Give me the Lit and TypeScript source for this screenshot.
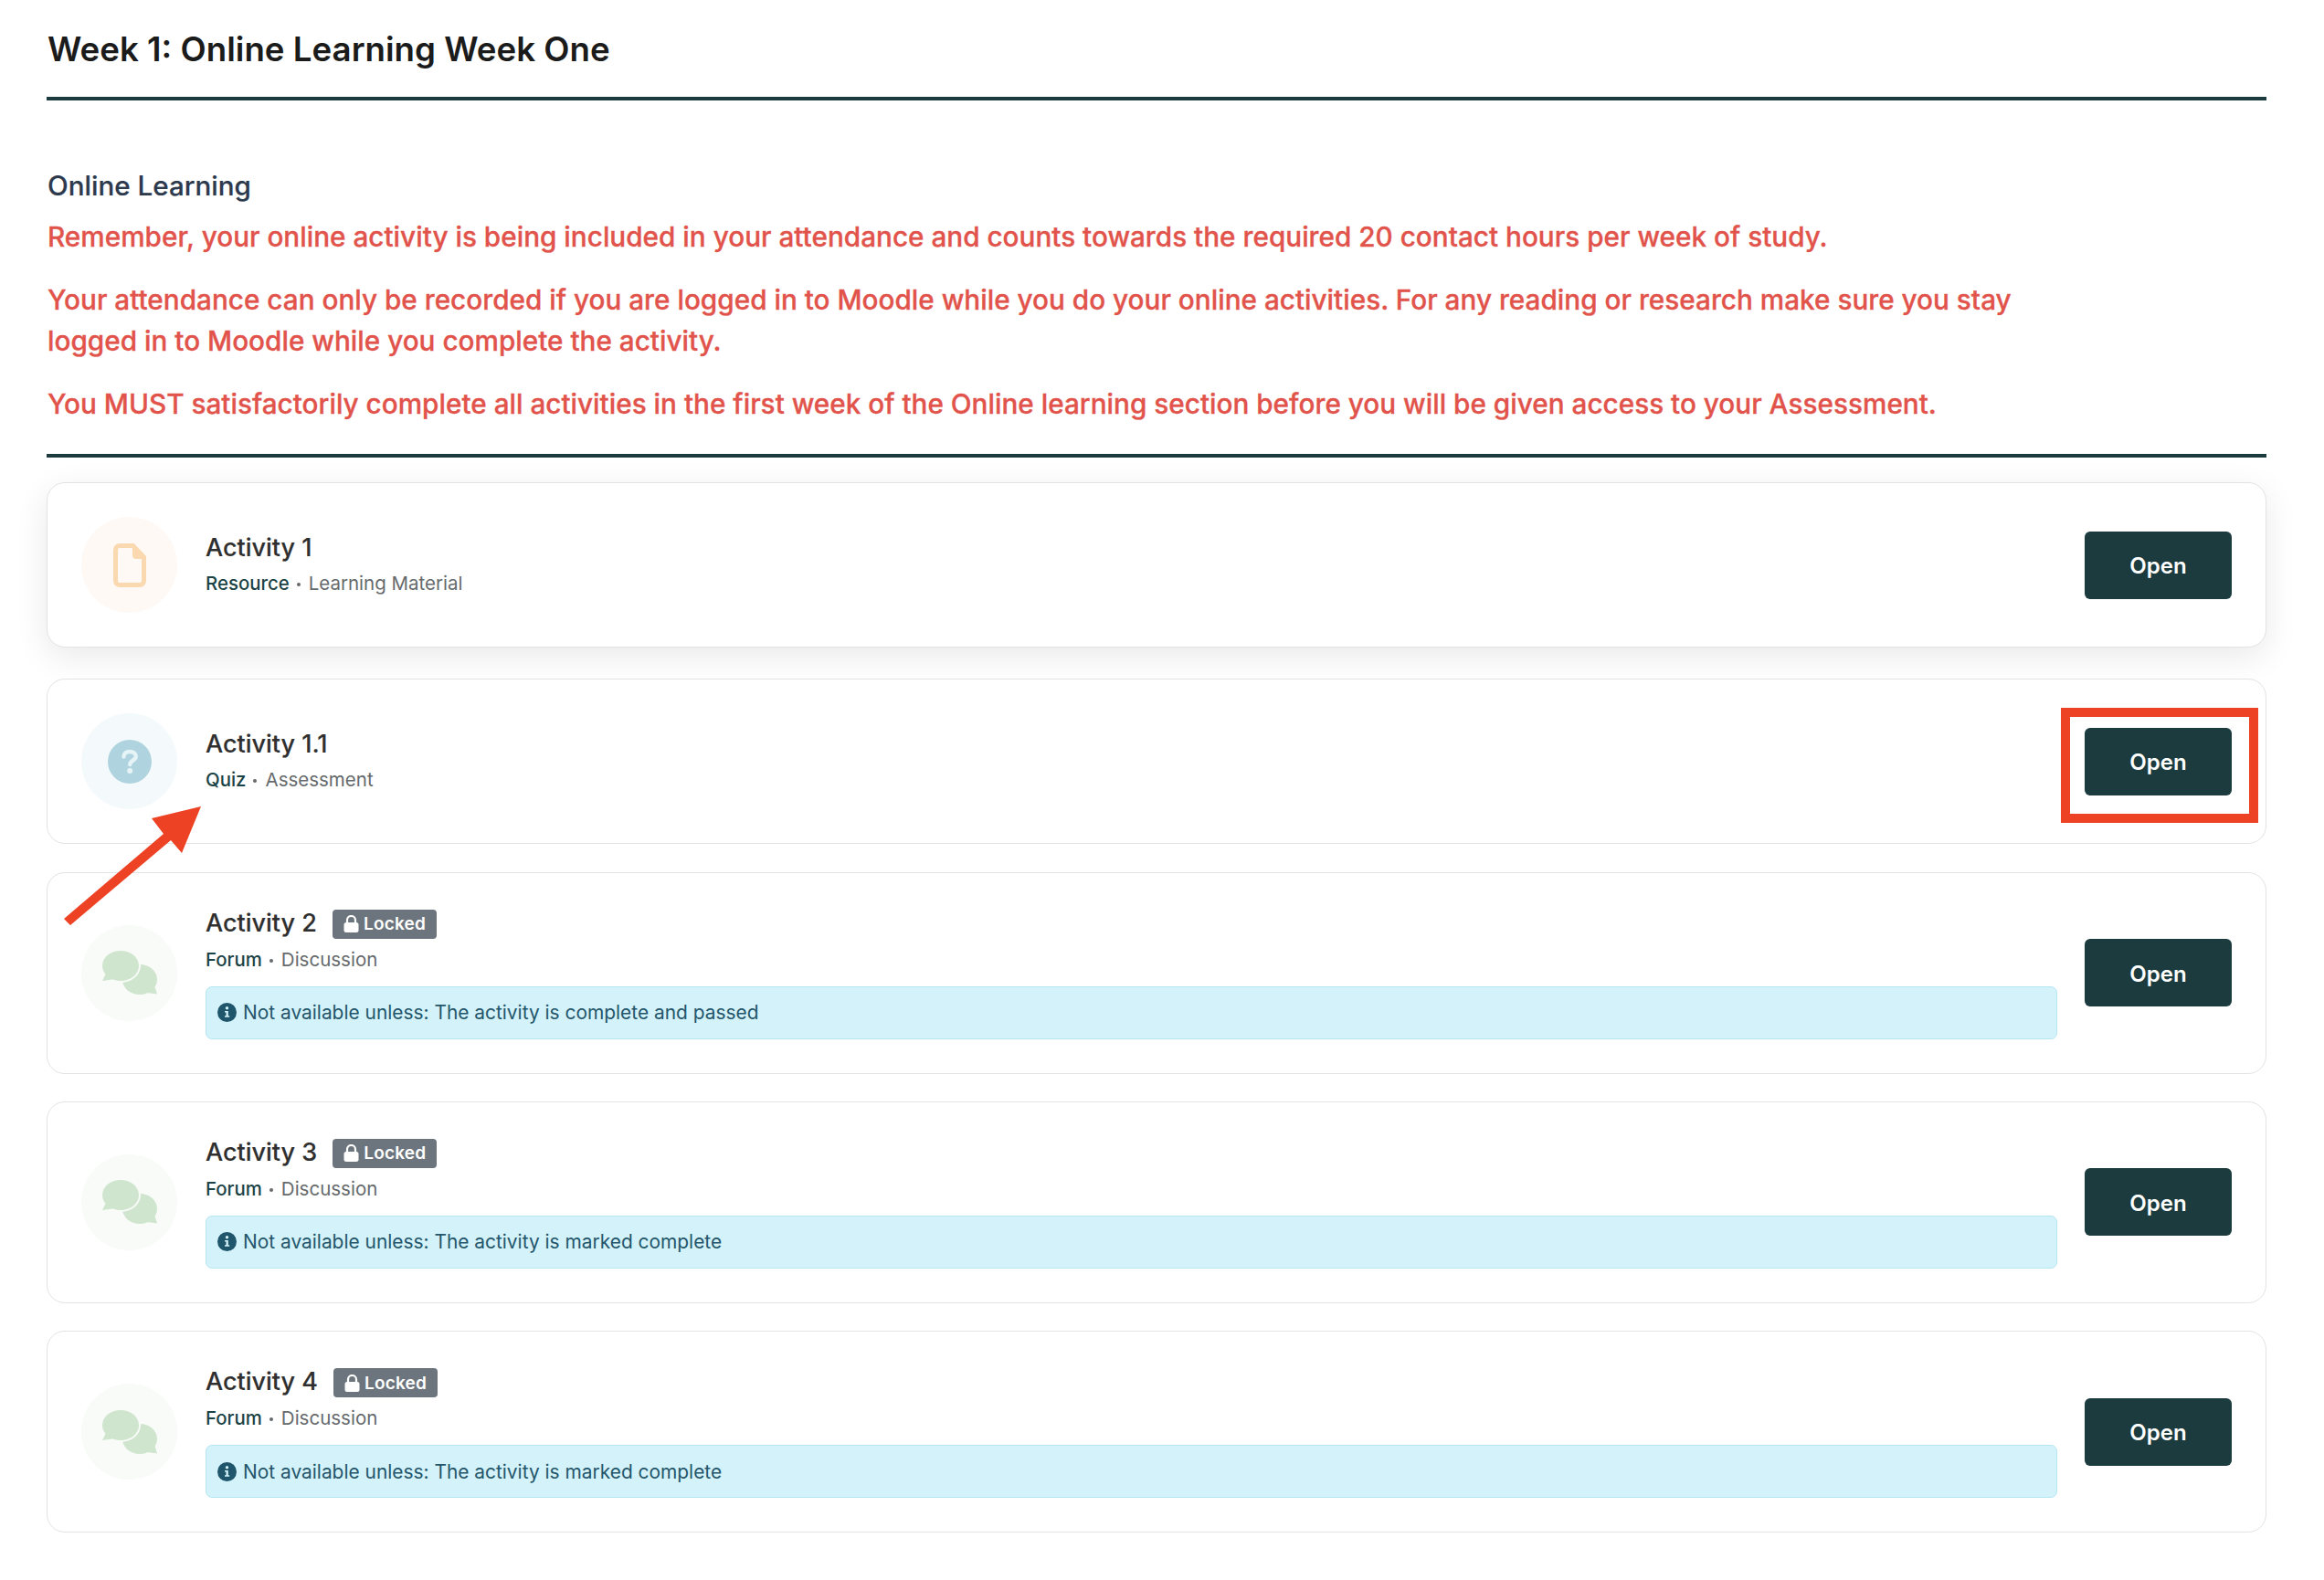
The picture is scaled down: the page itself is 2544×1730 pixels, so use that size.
import { LitElement, html, css, svg } from "lit";
import { customElement } from "lit/decorators.js";

type Act = { title: string; type: string; kind: string; icon: "file" | "quiz" | "chat"; note?: string; raised?: boolean };

const ACTS: Act[] = [
  { title: "Activity 1", type: "Resource", kind: "Learning Material", icon: "file", raised: true },
  { title: "Activity 1.1", type: "Quiz", kind: "Assessment", icon: "quiz" },
  { title: "Activity 2", type: "Forum", kind: "Discussion", icon: "chat", note: "Not available unless: The activity is complete and passed" },
  { title: "Activity 3", type: "Forum", kind: "Discussion", icon: "chat", note: "Not available unless: The activity is marked complete" },
  { title: "Activity 4", type: "Forum", kind: "Discussion", icon: "chat", note: "Not available unless: The activity is marked complete" },
];

const fileIcon = svg`<svg width="36" height="48" viewBox="0 0 36 48"><path d="M7 2.500H21.500L33.500 15V41A4.500 4.500 0 0 1 29 45.500H7A4.500 4.500 0 0 1 2.500 41V7A4.500 4.500 0 0 1 7 2.500Z" fill="none" stroke="#fbd9b0" stroke-width="5"/><path d="M21 1H23L35 14V17H25A4 4 0 0 1 21 13Z" fill="#fbd9b0"/></svg>`;
const quizIcon = svg`<svg width="48" height="48" viewBox="0 0 48 48"><circle cx="24" cy="24" r="24" fill="#b0d3e0"/><path d="M17.500 18.500C17.500 15 20 13 24 13C28 13 30.800 15 30.800 18.300C30.800 22.500 24.300 22.800 24.300 27" fill="none" stroke="#e6f3f7" stroke-width="4.400" stroke-linecap="round"/><circle cx="24.200" cy="34" r="3" fill="#e6f3f7"/></svg>`;
const chatIcon = svg`<svg width="60" height="48" viewBox="0 0 60 48"><ellipse cx="41" cy="31.500" rx="19" ry="16.500" fill="#cfe5cd"/><path d="M50 40L57 38L60 47.500L49 46Z" fill="#cfe5cd"/><ellipse cx="20" cy="16.500" rx="22" ry="18.500" fill="#f8fbf8"/><ellipse cx="20" cy="16.500" rx="20" ry="16.500" fill="#cfe5cd"/><path d="M4 25L0 33L11 31.500L13 28Z" fill="#cfe5cd"/></svg>`;
const lockIcon = svg`<svg width="17" height="19" viewBox="0 0 17 19"><path d="M4 9V5.500A4.500 4.500 0 0 1 13 5.500V9" fill="none" stroke="#fff" stroke-width="2.200"/><rect x="0.500" y="8" width="16" height="11" rx="2.500" fill="#fff"/></svg>`;
const infoIcon = svg`<svg width="21" height="21" viewBox="0 0 21 21"><circle cx="10.500" cy="10.500" r="10.500" fill="#20566b"/><circle cx="10.500" cy="5.800" r="1.700" fill="#d4f2fa"/><path d="M8 9H11.800V14.200H13.200V15.800H8V14.200H9.500V10.600H8Z" fill="#d4f2fa"/></svg>`;

const ICONS = { file: fileIcon, quiz: quizIcon, chat: chatIcon };

@customElement("app-root")
export class AppRoot extends LitElement {
  static styles = css`
    :host {
      display: block;
      position: relative;
      box-sizing: border-box;
      min-height: 1730px;
      padding: 0 63px 0 51px;
      background: #fff;
      font-family: Inter, "Liberation Sans", sans-serif;
      color: #2f2f2f;
    }
    h1 {
      margin: 0;
      padding: 31px 0 0 1px;
      box-sizing: border-box;
      font-size: 36.700px;
      line-height: 46px;
      font-weight: 600;
      color: #1b1b1b;
      border-bottom: 4px solid #1b3b3f;
      height: 110px;
    }
    .intro {
      height: 391px;
      box-sizing: border-box;
      padding: 72px 0 0 1px;
      border-bottom: 4px solid #1b3b3f;
    }
    h2 {
      margin: 0 0 13px;
      font-size: 29.600px;
      line-height: 42px;
      font-weight: 500;
      color: #2d3a4e;
      -webkit-text-stroke: 0.200px #2d3a4e;
    }
    .intro p {
      margin: 0 0 24px;
      max-width: 2220px;
      font-size: 29.720px;
      line-height: 45px;
      font-weight: 500;
      color: #e1534b;
      -webkit-text-stroke: 0.300px #e1534b;
    }
    .cards {
      display: flex;
      flex-direction: column;
      padding-top: 27px;
      gap: 30.300px;
    }
    .card {
      display: flex;
      align-items: center;
      gap: 31px;
      padding: 37px;
      border: 1px solid #e2e3e5;
      border-radius: 20px;
      background: #fff;
    }
    .card.raised {
      box-shadow: 0 10px 36px rgba(0, 0, 0, 0.09);
      margin-bottom: 4px;
    }
    .disc {
      flex: none;
      width: 105px;
      height: 105px;
      margin-right: -1px;
      border-radius: 50%;
      display: flex;
      align-items: center;
      justify-content: center;
    }
    .disc svg {
      display: block;
    }
    .disc.file { background: #fef9f4; }
    .disc.quiz { background: #f4fafb; }
    .disc.chat { background: #f8fbf8; }
    .body {
      flex: 1;
      min-width: 0;
      margin-left: 1px;
      margin-right: -1px;
    }
    .title {
      display: flex;
      align-items: center;
      gap: 17px;
      font-size: 27px;
      line-height: 33px;
      font-weight: 500;
      color: #2f2f2f;
      -webkit-text-stroke: 0.150px #2f2f2f;
    }
    .badge {
      display: inline-flex;
      align-items: center;
      gap: 5px;
      height: 32px;
      padding: 0 12px;
      margin-top: 3px;
      box-sizing: border-box;
      border-radius: 4px;
      background: #6c757d;
      color: #fff;
      font-size: 19px;
      letter-spacing: 0.200px;
      font-weight: 600;
      -webkit-text-stroke: 0;
    }
    .sub {
      display: flex;
      align-items: center;
      margin-top: 8px;
      font-size: 20.500px;
      line-height: 30px;
      color: #666a6c;
    }
    .sub b {
      font-weight: 500;
      font-size: 20.400px;
      color: #1b4346;
    }
    .dot {
      width: 4px;
      height: 4px;
      margin: 2px 9px 0 8px;
      border-radius: 50%;
      background: #666a6c;
    }
    .alert {
      display: flex;
      align-items: center;
      gap: 7px;
      height: 58px;
      box-sizing: border-box;
      margin-top: 14px;
      padding: 0 12px;
      border: 1px solid #b5e6f3;
      border-radius: 7px;
      background: #d4f2fa;
      color: #23566a;
      font-size: 20.900px;
    }
    .open {
      flex: none;
      width: 161px;
      height: 74px;
      padding: 2px 0 0;
      border: 0;
      border-radius: 6px;
      background: #1b3b3f;
      color: #fff;
      font: 600 24px Inter, "Liberation Sans", sans-serif;
    }
    .mark {
      position: absolute;
      left: 0;
      top: 0;
      pointer-events: none;
    }
  `;

  render() {
    return html`
      <h1>Week 1: Online Learning Week One</h1>
      <section class="intro">
        <h2>Online Learning</h2>
        <p>Remember, your online activity is being included in your attendance and counts towards the required 20 contact hours per week of study.</p>
        <p>Your attendance can only be recorded if you are logged in to Moodle while you do your online activities. For any reading or research make sure you stay logged in to Moodle while you complete the activity.</p>
        <p>You MUST satisfactorily complete all activities in the first week of the Online learning section before you will be given access to your Assessment.</p>
      </section>
      <section class="cards">
        ${ACTS.map(
          (a) => html`
            <article class="card ${a.raised ? "raised" : ""}">
              <div class="disc ${a.icon}">${ICONS[a.icon]}</div>
              <div class="body">
                <div class="title">
                  <span>${a.title}</span>
                  ${a.note ? html`<span class="badge">${lockIcon}Locked</span>` : ""}
                </div>
                <div class="sub"><b>${a.type}</b><span class="dot"></span>${a.kind}</div>
                ${a.note ? html`<div class="alert">${infoIcon}<span>${a.note}</span></div>` : ""}
              </div>
              <button class="open">Open</button>
            </article>
          `
        )}
      </section>
      <svg class="mark" width="2544" height="1730" viewBox="0 0 2544 1730">
        <rect x="2261" y="780" width="206" height="116" fill="none" stroke="#ee4224" stroke-width="10"/>
        <path d="M70 1006L179 913L166 896L220 883L199 934L187 920L77 1013Z" fill="#ee4224"/>
      </svg>
    `;
  }
}
